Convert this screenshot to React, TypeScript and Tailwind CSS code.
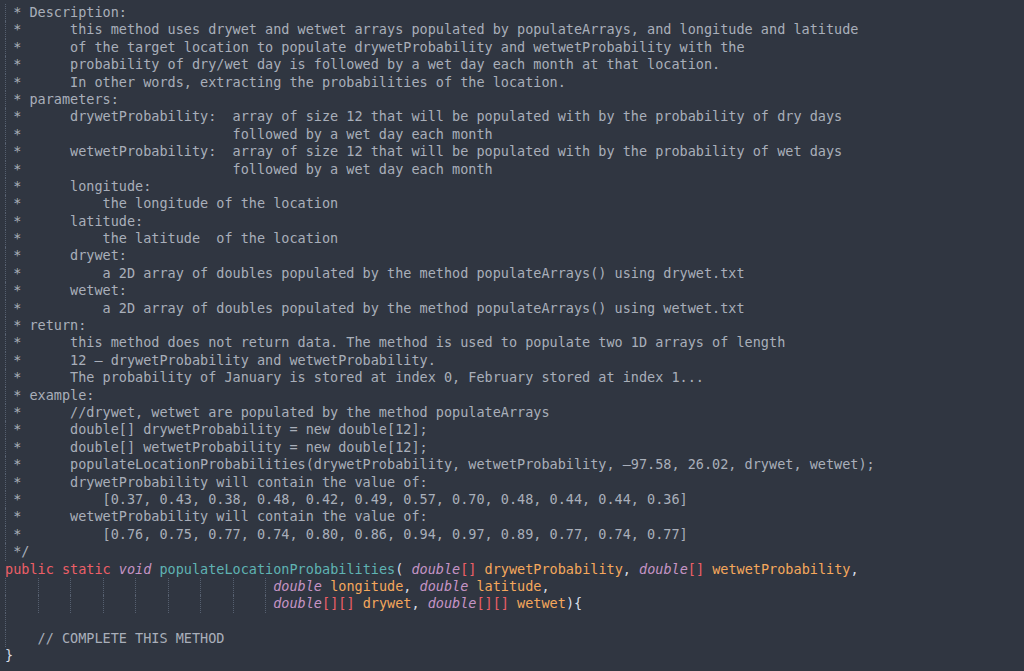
import React from "react";

type Seg = [string, string];

const C = "text-[#a9afba]";
const W = "text-[#d8dee9]";
const R = "text-[#ec5f67]";
const P = "text-[#c594c5] italic";
const T = "text-[#5fb3b3]";
const O = "text-[#f5a85c]";

const GUIDE_POS = [
  "left-0",
  "left-[4ch]",
  "left-[8ch]",
  "left-[12ch]",
  "left-[16ch]",
  "left-[20ch]",
  "left-[24ch]",
  "left-[28ch]",
  "left-[32ch]",
];

const commentLines = [
  " * Description:",
  " *      this method uses drywet and wetwet arrays populated by populateArrays, and longitude and latitude",
  " *      of the target location to populate drywetProbability and wetwetProbability with the",
  " *      probability of dry/wet day is followed by a wet day each month at that location.",
  " *      In other words, extracting the probabilities of the location.",
  " * parameters:",
  " *      drywetProbability:  array of size 12 that will be populated with by the probability of dry days",
  " *                          followed by a wet day each month",
  " *      wetwetProbability:  array of size 12 that will be populated with by the probability of wet days",
  " *                          followed by a wet day each month",
  " *      longitude:",
  " *          the longitude of the location",
  " *      latitude:",
  " *          the latitude  of the location",
  " *      drywet:",
  " *          a 2D array of doubles populated by the method populateArrays() using drywet.txt",
  " *      wetwet:",
  " *          a 2D array of doubles populated by the method populateArrays() using wetwet.txt",
  " * return:",
  " *      this method does not return data. The method is used to populate two 1D arrays of length",
  " *      12 \u2013 drywetProbability and wetwetProbability.",
  " *      The probability of January is stored at index 0, February stored at index 1...",
  " * example:",
  " *      //drywet, wetwet are populated by the method populateArrays",
  " *      double[] drywetProbability = new double[12];",
  " *      double[] wetwetProbability = new double[12];",
  " *      populateLocationProbabilities(drywetProbability, wetwetProbability, \u201397.58, 26.02, drywet, wetwet);",
  " *      drywetProbability will contain the value of:",
  " *          [0.37, 0.43, 0.38, 0.48, 0.42, 0.49, 0.57, 0.70, 0.48, 0.44, 0.44, 0.36]",
  " *      wetwetProbability will contain the value of:",
  " *          [0.76, 0.75, 0.77, 0.74, 0.80, 0.86, 0.94, 0.97, 0.89, 0.77, 0.74, 0.77]",
  " */",
];

const pad = " ".repeat(33);

const lines: { segs: Seg[]; guides: number }[] = [
  ...commentLines.map((t) => ({ segs: [[t, C]] as Seg[], guides: 1 })),
  {
    guides: 0,
    segs: [
      ["public static ", R],
      ["void", P],
      [" ", W],
      ["populateLocationProbabilities", T],
      ["( ", W],
      ["double", P],
      ["[]", R],
      [" drywetProbability", O],
      [", ", W],
      ["double", P],
      ["[]", R],
      [" wetwetProbability", O],
      [",", W],
    ],
  },
  {
    guides: 9,
    segs: [
      [pad, W],
      ["double", P],
      [" longitude", O],
      [", ", W],
      ["double", P],
      [" latitude", O],
      [",", W],
    ],
  },
  {
    guides: 9,
    segs: [
      [pad, W],
      ["double", P],
      ["[][]", R],
      [" drywet", O],
      [", ", W],
      ["double", P],
      ["[][]", R],
      [" wetwet", O],
      ["){", W],
    ],
  },
  { guides: 1, segs: [["", W]] },
  { guides: 1, segs: [["    // COMPLETE THIS METHOD", C]] },
  { guides: 0, segs: [["}", W]] },
];

export default function App() {
  return (
    <div className="w-[1024px] h-[671px] overflow-hidden bg-[#303641] pl-[5px] pt-[4px] font-['DejaVu_Sans_Mono',monospace] text-[13.5px] leading-[17.4px]">
      {lines.map((line, i) => (
        <div key={i} className="relative h-[17.4px] whitespace-pre">
          {GUIDE_POS.slice(0, line.guides).map((g, j) => (
            <span
              key={j}
              className={`absolute top-0 bottom-0 w-0 border-l border-dotted border-[#566070] ${g}`}
            />
          ))}
          {line.segs.map((s, j) => (
            <span key={j} className={s[1]}>
              {s[0]}
            </span>
          ))}
        </div>
      ))}
    </div>
  );
}
